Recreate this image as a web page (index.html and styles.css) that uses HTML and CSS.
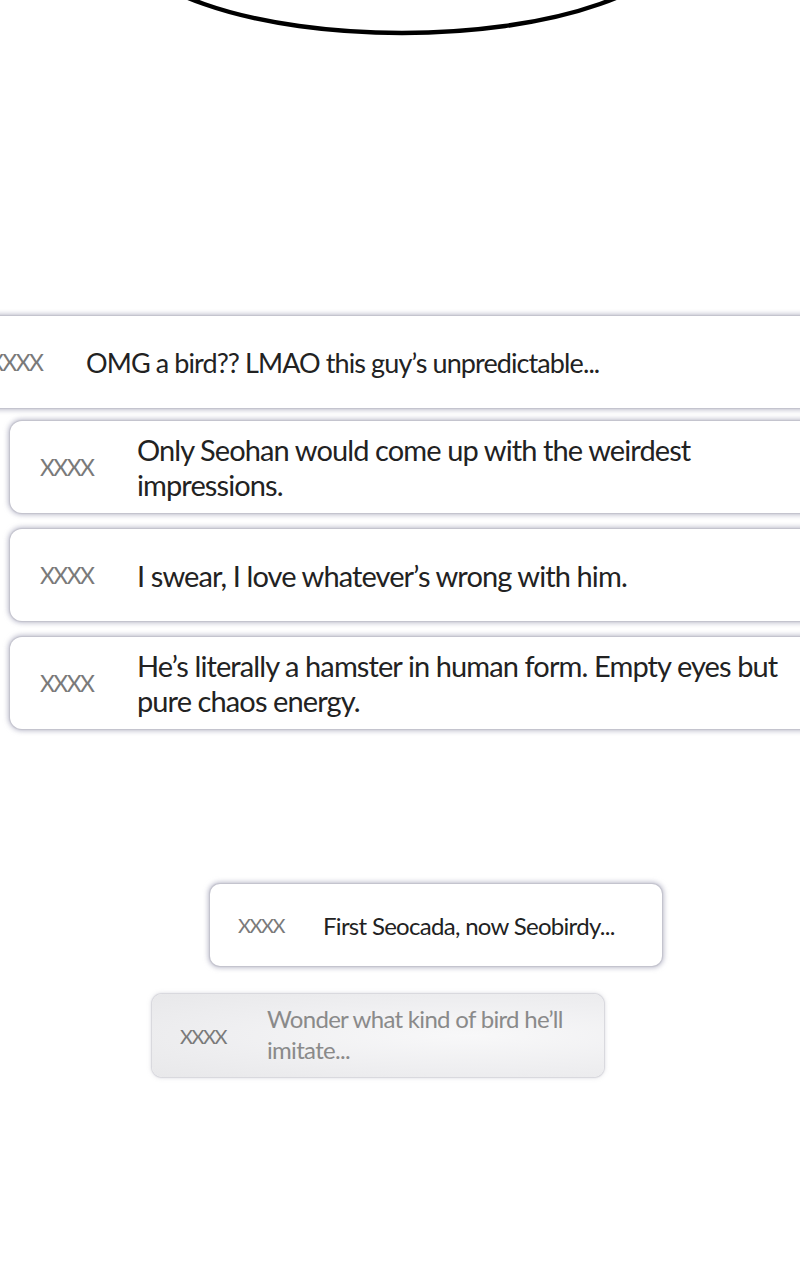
FILE: index.html
```html
<!DOCTYPE html>
<html lang="en">
<head>
<meta charset="utf-8">
<title>Comments</title>
<link rel="stylesheet" href="styles.css">
</head>
<body>
<div class="page">
  <svg class="bubble" width="800" height="40" viewBox="0 0 800 40">
    <ellipse cx="402" cy="-66" rx="280" ry="99" fill="#fff" stroke="#000" stroke-width="4.5"/>
  </svg>

  <section class="feed feed--wide">
    <div class="card card--bleed">
      <span class="name">XXXX</span>
      <p class="msg">OMG a bird?? LMAO this guy’s unpredictable...</p>
    </div>
    <div class="card">
      <span class="name">XXXX</span>
      <p class="msg">Only Seohan would come up with the weirdest impressions.</p>
    </div>
    <div class="card">
      <span class="name">XXXX</span>
      <p class="msg">I swear, I love whatever’s wrong with him.</p>
    </div>
    <div class="card">
      <span class="name">XXXX</span>
      <p class="msg">He’s literally a hamster in human form. Empty eyes but pure chaos energy.</p>
    </div>
  </section>

  <section class="feed feed--small">
    <div class="card card--small card--first">
      <span class="name">XXXX</span>
      <p class="msg">First Seocada, now Seobirdy...</p>
    </div>
    <div class="card card--small card--faded">
      <span class="name">XXXX</span>
      <p class="msg">Wonder what kind of bird he’ll imitate...</p>
    </div>
  </section>
</div>
</body>
</html>
```

FILE: styles.css
```css
* { box-sizing: border-box; }

html, body {
  margin: 0;
  padding: 0;
  background: #fff;
}

.page {
  width: 800px;
  height: 1280px;
  overflow: hidden;
  font-family: "Lato", "Noto Sans", sans-serif;
}

.bubble {
  display: block;
}

.feed {
  display: flex;
  flex-direction: column;
}

.feed--wide {
  margin-top: 276px;
  gap: 16px;
}

.card {
  display: flex;
  align-items: center;
  min-height: 92px;
  margin-left: 10px;
  margin-right: -40px;
  padding: 0 30px;
  background: #fff;
  border-radius: 12px;
  box-shadow: 0 0 1px 1px #c2c2cc, 0 0 5px 2px rgba(150, 150, 175, 0.6);
}

.card--bleed {
  margin-left: -41px;
  margin-bottom: -3px;
}

.name {
  flex: 0 0 auto;
  width: 97px;
  font-size: 23px;
  letter-spacing: -1.6px;
  color: #7a7a7a;
}

.msg {
  margin: 0;
  max-width: 655px;
  font-size: 29px;
  line-height: 35px;
  letter-spacing: -0.9px;
  color: #222;
}

.card--bleed .msg {
  font-size: 27px;
}

.feed--small {
  margin-top: 155px;
  gap: 28px;
}

.card--small {
  width: 452px;
  min-height: 82px;
  margin-right: 0;
  padding: 0 28px;
  border-radius: 10px;
}

.card--small .name {
  width: 85px;
  font-size: 20px;
  letter-spacing: -1.5px;
}

.card--small .msg {
  font-size: 24px;
  line-height: 31px;
  letter-spacing: -0.7px;
}

.card--first {
  margin-left: 210px;
}

.card--faded {
  margin-left: 152px;
  min-height: 83px;
  background: radial-gradient(ellipse at 70% 50%, #f8f8f9 0%, #eeeef0 60%, #e8e8ea 100%);
  box-shadow: 0 0 1px 1px #d6d6dc, 0 0 4px 1px rgba(170, 170, 180, 0.35);
}

.card--faded .name {
  width: 87px;
}

.card--faded .msg {
  color: #8a8a8a;
  margin-top: -4px;
}
```
